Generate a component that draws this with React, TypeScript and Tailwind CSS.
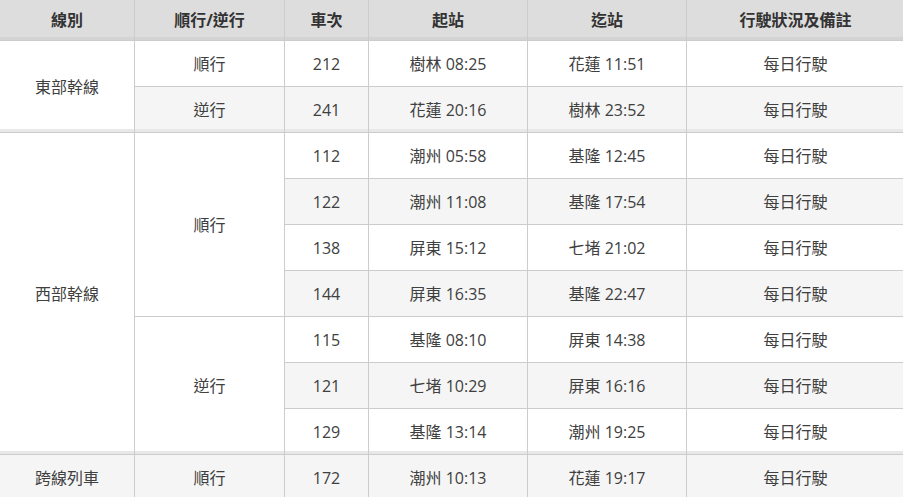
import React from 'react'

type Row = {
  line?: { label: string; span: number }
  dir?: { label: string; span: number }
  no: string
  from: string
  to: string
  note: string
  groupEnd?: boolean
}

const rows: Row[] = [
  { line: { label: '東部幹線', span: 2 }, dir: { label: '順行', span: 1 }, no: '212', from: '樹林 08:25', to: '花蓮 11:51', note: '每日行駛' },
  { dir: { label: '逆行', span: 1 }, no: '241', from: '花蓮 20:16', to: '樹林 23:52', note: '每日行駛', groupEnd: true },
  { line: { label: '西部幹線', span: 7 }, dir: { label: '順行', span: 4 }, no: '112', from: '潮州 05:58', to: '基隆 12:45', note: '每日行駛' },
  { no: '122', from: '潮州 11:08', to: '基隆 17:54', note: '每日行駛' },
  { no: '138', from: '屏東 15:12', to: '七堵 21:02', note: '每日行駛' },
  { no: '144', from: '屏東 16:35', to: '基隆 22:47', note: '每日行駛' },
  { dir: { label: '逆行', span: 3 }, no: '115', from: '基隆 08:10', to: '屏東 14:38', note: '每日行駛' },
  { no: '121', from: '七堵 10:29', to: '屏東 16:16', note: '每日行駛' },
  { no: '129', from: '基隆 13:14', to: '潮州 19:25', note: '每日行駛', groupEnd: true },
  { line: { label: '跨線列車', span: 1 }, dir: { label: '順行', span: 1 }, no: '172', from: '潮州 10:13', to: '花蓮 19:17', note: '每日行駛' },
]

const cell = 'border border-[#cccccc] text-center align-middle px-2'
const endCell = 'shadow-[inset_0_-3px_0_#e8e8e8]'

export default function App() {
  return (
    <div className="w-[903px] h-[497px] overflow-hidden bg-white font-['Open_Sans','Noto_Sans_CJK_TC',sans-serif] text-[16px] text-[#404040]">
      <table className="w-[906px] -ml-px -mt-px border-collapse table-fixed">
        <colgroup>
          <col className="w-[135px]" />
          <col className="w-[150px]" />
          <col className="w-[84px]" />
          <col className="w-[159px]" />
          <col className="w-[159px]" />
          <col />
        </colgroup>
        <thead>
          <tr className="h-[41px] bg-[#dddddd]">
            {['線別', '順行/逆行', '車次', '起站', '迄站', '行駛狀況及備註'].map(h => (
              <th key={h} className={cell + ' font-bold text-[#333333] shadow-[inset_0_-3px_0_#d3d3d3]'}>{h}</th>
            ))}
          </tr>
        </thead>
        <tbody>
          {rows.map((r, i) => {
            const end = r.groupEnd ? ' ' + endCell : ''
            const lineEnd = r.line && r.line.label !== '跨線列車' ? ' ' + endCell : ''
            const dirEnd = r.dir && (i + r.dir.span - 1 === 1 || i + r.dir.span - 1 === 8) ? ' ' + endCell : ''
            return (
              <tr key={r.no} className={'h-[46px] ' + (i % 2 === 1 ? 'bg-[#f5f5f5]' : 'bg-white')}>
                {r.line && <td rowSpan={r.line.span} className={cell + lineEnd}>{r.line.label}</td>}
                {r.dir && <td rowSpan={r.dir.span} className={cell + dirEnd}>{r.dir.label}</td>}
                <td className={cell + end}>{r.no}</td>
                <td className={cell + end}>{r.from}</td>
                <td className={cell + end}>{r.to}</td>
                <td className={cell + end}>{r.note}</td>
              </tr>
            )
          })}
        </tbody>
      </table>
    </div>
  )
}
